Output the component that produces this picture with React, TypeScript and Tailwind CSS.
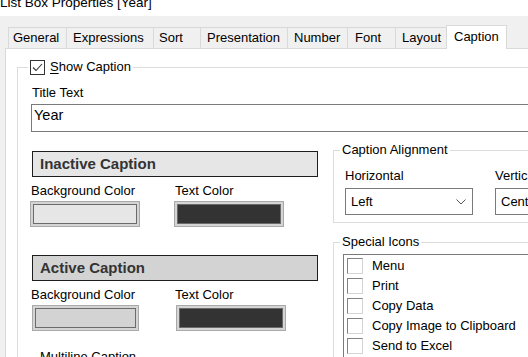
import React from "react";

const tabs = [
  { l: "General", c: "w-[59px] pl-[4px] border-l" },
  { l: "Expressions", c: "w-[87px] pl-[6px]" },
  { l: "Sort", c: "w-[47px] pl-[5px]" },
  { l: "Presentation", c: "w-[87px] pl-[6px]" },
  { l: "Number", c: "w-[60px] pl-[6px]" },
  { l: "Font", c: "w-[48px] pl-[7px]" },
  { l: "Layout", c: "w-[51px] pl-[6px]" },
];

function Swatch({ cls, fill }: { cls: string; fill: string }) {
  return (
    <div className={`h-[26px] border border-[#a9a9a9] bg-[#d4d4d4] p-[2px] ${cls}`}>
      <div className={`h-full border border-[#6b6b6b] ${fill}`} />
    </div>
  );
}

function Chevron() {
  return (
    <svg width="10" height="6" viewBox="0 0 10 6">
      <polyline points="0.5,0.5 5,5 9.5,0.5" fill="none" stroke="#555" strokeWidth="1" />
    </svg>
  );
}

const icons = ["Menu", "Print", "Copy Data", "Copy Image to Clipboard", "Send to Excel", "Help"];

export default function App() {
  return (
    <div className="w-[528px] h-[357px] overflow-hidden bg-[#f0f0f0] font-['Liberation_Sans',Arial,sans-serif] text-[13px] leading-[16px] text-black flex flex-col">
      <div className="h-[16px] bg-white overflow-hidden shrink-0">
        <div className="mt-[-5px] text-[13.5px] leading-[15px] whitespace-nowrap">List Box Properties [Year]</div>
      </div>
      <div className="flex items-end pl-[8px] pt-[9px] h-[32px] shrink-0 relative z-10">
        {tabs.map((t) => (
          <div key={t.l} className={`h-[21px] border-t border-r border-[#d9d9d9] pt-[2px] whitespace-nowrap ${t.c}`}>
            {t.l}
          </div>
        ))}
        <div className="h-[24px] w-[61px] -ml-px -mb-px border-l border-t border-r border-[#d9d9d9] bg-white pl-[7px] pt-[3px]">
          Caption
        </div>
      </div>
      <div className="flex-1 ml-[5px] border-l border-t border-[#d9d9d9] bg-white overflow-hidden">
        <fieldset className="ml-[11px] mt-[10px] w-[600px] border-l border-t border-[#dcdcdc] p-0 m-0 min-w-0">
          <legend className="ml-[10px] px-[2px]">
            <div className="flex items-center h-[16px]">
              <div className="w-[15px] h-[15px] border border-[#333] bg-white flex items-center justify-center">
                <svg width="13" height="13" viewBox="0 0 13 13">
                  <polyline points="2,6.5 5,9.5 11,3" fill="none" stroke="#333" strokeWidth="1.1" />
                </svg>
              </div>
              <span className="ml-[5px]">
                <span className="underline underline-offset-[2px]">S</span>how Caption
              </span>
            </div>
          </legend>
          <div className="pl-[13px]">
            <div className="mt-[10px] ml-px">Title Text</div>
            <div className="mt-[3px] h-[28px] border border-[#7a7a7a] pt-[2px] pl-[2px] text-[14.5px] leading-[16px]">Year</div>
            <div className="flex">
              <div className="w-[302px] shrink-0">
                <div className="mt-[19px] ml-px w-[286px] h-[26px] border border-[#1e1e1e] bg-[#e6e6e6] pl-[7px] flex items-center font-bold text-[15px] text-[#333]">
                  Inactive Caption
                </div>
                <div className="flex mt-[6px]">
                  <div className="w-[144px]">Background Color</div>
                  <div>Text Color</div>
                </div>
                <div className="flex mt-[2px]">
                  <div className="w-[144px]">
                    <Swatch cls="-ml-px w-[110px]" fill="bg-[#e6e6e6]" />
                  </div>
                  <Swatch cls="-ml-px w-[110px]" fill="bg-[#333333]" />
                </div>
                <div className="mt-[28px] ml-px w-[286px] h-[26px] border border-[#1e1e1e] bg-[#d3d3d3] pl-[7px] flex items-center font-bold text-[15px] text-[#333]">
                  Active Caption
                </div>
                <div className="flex mt-[6px]">
                  <div className="w-[144px]">Background Color</div>
                  <div>Text Color</div>
                </div>
                <div className="flex mt-[2px]">
                  <div className="w-[144px]">
                    <Swatch cls="ml-px w-[107px]" fill="bg-[#d3d3d3]" />
                  </div>
                  <Swatch cls="ml-px w-[110px]" fill="bg-[#333333]" />
                </div>
                <div className="mt-[18px] pl-[9px]">Multiline Caption</div>
              </div>
              <div className="flex flex-col w-[300px] shrink-0">
                <fieldset className="mt-[10px] border-l border-t border-b border-[#dcdcdc] p-0 m-0 min-w-0">
                  <legend className="ml-[6px] px-[2px] leading-[16px]">Caption Alignment</legend>
                  <div className="pl-[11px] flex pb-[7px]">
                    <div className="w-[150px] shrink-0">
                      <div className="mt-[10px]">Horizontal</div>
                      <div className="mt-[4px] w-[128px] h-[27px] border border-[#7a7a7a] flex items-center justify-between pl-[5px] pr-[6px]">
                        <span>Left</span>
                        <Chevron />
                      </div>
                    </div>
                    <div className="w-[140px] shrink-0">
                      <div className="mt-[10px]">Vertical</div>
                      <div className="mt-[4px] w-[128px] h-[27px] border border-[#7a7a7a] flex items-center justify-between pl-[5px] pr-[6px]">
                        <span>Center</span>
                        <Chevron />
                      </div>
                    </div>
                  </div>
                </fieldset>
                <fieldset className="mt-[11px] border-l border-t border-[#dcdcdc] p-0 m-0 min-w-0">
                  <legend className="ml-[6px] px-[2px] leading-[16px]">Special Icons</legend>
                  <div className="ml-[9px] mt-[4px] border-l border-t border-[#7a7a7a] pt-px pl-[3px]">
                    {icons.map((i) => (
                      <div key={i} className="h-[20px] flex items-center">
                        <div className="w-[16px] h-[16px] border border-l-[#828282] border-t-[#828282] border-r-[#d4d4d4] border-b-[#d4d4d4] bg-white shrink-0" />
                        <span className="ml-[9px] whitespace-nowrap">{i}</span>
                      </div>
                    ))}
                  </div>
                </fieldset>
              </div>
            </div>
          </div>
        </fieldset>
      </div>
    </div>
  );
}
